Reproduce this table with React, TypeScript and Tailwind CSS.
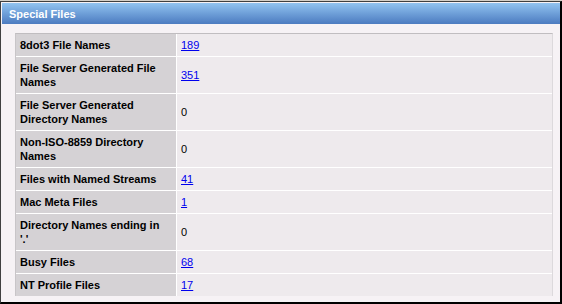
type Row = { label: string; value: string; link?: boolean };

const rows: Row[] = [
  { label: "8dot3 File Names", value: "189", link: true },
  { label: "File Server Generated File Names", value: "351", link: true },
  { label: "File Server Generated Directory Names", value: "0" },
  { label: "Non-ISO-8859 Directory Names", value: "0" },
  { label: "Files with Named Streams", value: "41", link: true },
  { label: "Mac Meta Files", value: "1", link: true },
  { label: "Directory Names ending in '.'", value: "0" },
  { label: "Busy Files", value: "68", link: true },
  { label: "NT Profile Files", value: "17", link: true },
];

export default function App() {
  return (
    <div className="w-[562px] h-[304px] bg-[#d4d0c8] pt-px font-['Liberation_Sans',Arial,sans-serif] text-[11px] leading-[14px]">
      <div className="h-[303px] flex flex-col border-t border-l border-t-[#404040] border-l-[#404040] border-r-2 border-b-2 border-r-black border-b-black bg-[#f6f2f5]">
        {/* panel title bar */}
        <div className="ml-px mt-px h-[21px] flex items-center pl-[7px] bg-gradient-to-b from-[#92c4f0] to-[#4c7bc0] text-white font-bold">
          Special Files
        </div>
        <div className="pl-[14px] pr-[7px] pt-[9px]">
          <div className="grid grid-cols-[160px_1fr] gap-px bg-white border-t border-l border-r border-t-[#c0bdc0] border-l-[#c8c5c8] border-r-[#dcd9dc]">
            {rows.map((r) => (
              <div key={r.label} className="contents">
                <div className="bg-[#d5d2d5] pl-[4px] pr-[6px] py-[4px] font-bold text-black">
                  {r.label}
                </div>
                <div className="bg-[#eeeaed] px-[4px] py-[4px] flex items-center">
                  {r.link ? (
                    <a href="#" className="text-[#0000ee] underline">
                      {r.value}
                    </a>
                  ) : (
                    <span className="text-black">{r.value}</span>
                  )}
                </div>
              </div>
            ))}
          </div>
        </div>
      </div>
    </div>
  );
}
